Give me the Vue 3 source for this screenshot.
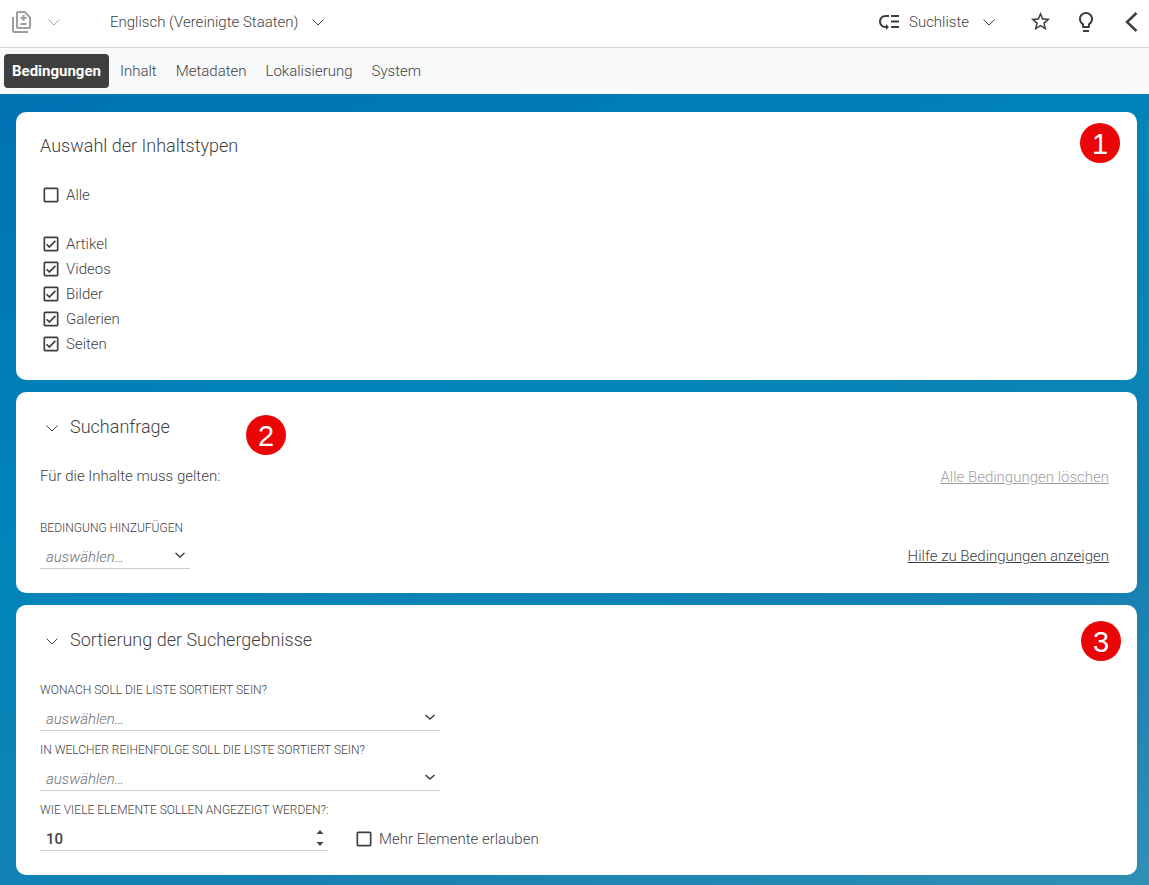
<script setup>
import { ref, reactive } from 'vue'

const tabs = ['Bedingungen', 'Inhalt', 'Metadaten', 'Lokalisierung', 'System']
const activeTab = ref('Bedingungen')

const language = ref('en-US')
const view = ref('list')

const all = ref(false)
const types = reactive([
  { id: 'article', label: 'Artikel', checked: true },
  { id: 'video', label: 'Videos', checked: true },
  { id: 'picture', label: 'Bilder', checked: true },
  { id: 'gallery', label: 'Galerien', checked: true },
  { id: 'page', label: 'Seiten', checked: true },
])

const toggleAll = () => types.forEach((type) => { type.checked = all.value })

const queryOpen = ref(true)
const sortOpen = ref(true)

const condition = ref('')
const sortBy = ref('')
const sortOrder = ref('')
const limit = ref(10)
const allowMore = ref(false)

const increment = () => limit.value++
const decrement = () => limit.value = Math.max(limit.value - 1, 0)

const boxEmpty = 'M19 5v14H5V5h14m0-2H5c-1.1 0-2 .9-2 2v14c0 1.1.9 2 2 2h14c1.1 0 2-.9 2-2V5c0-1.1-.9-2-2-2z'
const boxChecked = 'M19 3H5c-1.1 0-2 .9-2 2v14c0 1.1.9 2 2 2h14c1.1 0 2-.9 2-2V5c0-1.1-.9-2-2-2zm0 16H5V5h14v14zM17.99 9l-1.41-1.42-6.59 6.59-2.58-2.57-1.42 1.41 4 3.99z'
</script>

<template>
  <div class="app">
    <header class="toolbar">
      <button class="icon-button compare" type="button" aria-label="Vergleichen">
        <svg width="24" height="24" viewBox="0 0 24 24"><path d="M18 23H4c-1.1 0-2-.9-2-2V7h2v14h14v2zM14.500 7V5h-2v2h-2v2h2v2h2V9h2V7h-2zM16.500 13h-6v2h6v-2zM15 1H8c-1.100 0-1.990.9-1.990 2L6 17c0 1.100.89 2 1.990 2H19c1.100 0 2-.9 2-2V7l-6-6zm4 16H8V3h6.170L19 7.830V17z" /></svg>
        <svg class="chevron" width="14" height="14" viewBox="0 0 14 14"><path d="M1.500 4.500 7 10l5.500-5.500" /></svg>
      </button>

      <div class="picker language">
        <select v-model="language" aria-label="Sprache">
          <option value="en-US">Englisch (Vereinigte Staaten)</option>
        </select>
        <svg class="chevron" width="14" height="14" viewBox="0 0 14 14"><path d="M1.500 4.500 7 10l5.500-5.500" /></svg>
      </div>

      <div class="actions">
        <svg width="24" height="24" viewBox="0 0 24 24"><path d="M14 5h8v2h-8zm0 5.500h8v2h-8zm0 5.500h8v2h-8zM2 11.500C2 15.080 4.920 18 8.500 18H9v2l3-3-3-3v2h-.5C6.020 16 4 13.980 4 11.500S6.020 7 8.500 7H12V5H8.500C4.920 5 2 7.920 2 11.500z" /></svg>
        <div class="picker view">
          <select v-model="view" aria-label="Ansicht">
            <option value="list">Suchliste</option>
          </select>
          <svg class="chevron" width="14" height="14" viewBox="0 0 14 14"><path d="M1.500 4.500 7 10l5.500-5.500" /></svg>
        </div>
        <button class="icon-button star" type="button" aria-label="Favorit">
          <svg width="23" height="23" viewBox="0 0 24 24"><path d="M22 9.240l-7.190-.62L12 2 9.190 8.630 2 9.240l5.460 4.730L5.820 21 12 17.270 18.180 21l-1.630-7.030L22 9.240zM12 15.400l-3.760 2.270 1-4.280-3.320-2.880 4.380-.38L12 6.100l1.710 4.040 4.380.38-3.320 2.880 1 4.280L12 15.400z" /></svg>
        </button>
        <button class="icon-button bulb" type="button" aria-label="Hinweise">
          <svg width="24" height="24" viewBox="0 0 24 24"><path d="M9 20h6v2H9zM12 2C8.140 2 5 5.140 5 9c0 2.380 1.190 4.470 3 5.740V17c0 .55.45 1 1 1h6c.55 0 1-.45 1-1v-2.260c1.810-1.270 3-3.360 3-5.740 0-3.860-3.140-7-7-7zm2.850 11.100l-.85.6V16h-4v-2.300l-.85-.6C7.800 12.160 7 10.630 7 9c0-2.760 2.240-5 5-5s5 2.240 5 5c0 1.630-.8 3.160-2.150 4.100z" /></svg>
        </button>
        <button class="icon-button back" type="button" aria-label="Zurück">
          <svg width="14" height="24" viewBox="0 0 14 24"><path class="line" d="M12.500 3 3 12l9.500 9" /></svg>
        </button>
      </div>
    </header>

    <nav class="tabs">
      <button
        v-for="tab in tabs"
        :key="tab"
        type="button"
        :class="{ active: tab === activeTab }"
        @click="activeTab = tab">
        {{ tab }}
      </button>
    </nav>

    <main>
      <section class="card types">
        <span class="marker marker-one">1</span>
        <h2>Auswahl der Inhaltstypen</h2>
        <label class="check">
          <span class="box">
            <input v-model="all" type="checkbox" @change="toggleAll" />
            <svg width="20" height="20" viewBox="0 0 24 24"><path :d="all ? boxChecked : boxEmpty" /></svg>
          </span>
          Alle
        </label>
        <div class="type-list">
          <label v-for="type in types" :key="type.id" class="check">
            <span class="box">
              <input v-model="type.checked" type="checkbox" />
              <svg width="20" height="20" viewBox="0 0 24 24"><path :d="type.checked ? boxChecked : boxEmpty" /></svg>
            </span>
            {{ type.label }}
          </label>
        </div>
      </section>

      <section class="card query">
        <span class="marker marker-two">2</span>
        <h2>
          <button class="toggle" type="button" :aria-expanded="queryOpen" @click="queryOpen = !queryOpen">
            <svg class="chevron" width="14" height="14" viewBox="0 0 14 14"><path d="M1.500 4.500 7 10l5.500-5.500" /></svg>
            Suchanfrage
          </button>
        </h2>
        <div v-if="queryOpen">
          <div class="row intro">
            <span>Für die Inhalte muss gelten:</span>
            <a class="muted" href="#">Alle Bedingungen löschen</a>
          </div>
          <div class="row">
            <div class="field short">
              <label for="condition">Bedingung hinzufügen</label>
              <div class="control">
                <select id="condition" v-model="condition">
                  <option value="">auswählen…</option>
                </select>
                <svg class="arrow" width="12" height="12" viewBox="0 0 12 12"><path d="M1.500 4 6 8l4.500-4" /></svg>
              </div>
            </div>
            <a class="help" href="#">Hilfe zu Bedingungen anzeigen</a>
          </div>
        </div>
      </section>

      <section class="card sorting">
        <span class="marker marker-three">3</span>
        <h2>
          <button class="toggle" type="button" :aria-expanded="sortOpen" @click="sortOpen = !sortOpen">
            <svg class="chevron" width="14" height="14" viewBox="0 0 14 14"><path d="M1.500 4.500 7 10l5.500-5.500" /></svg>
            Sortierung der Suchergebnisse
          </button>
        </h2>
        <div v-if="sortOpen" class="fields">
          <div class="field">
            <label for="sort-by">Wonach soll die Liste sortiert sein?</label>
            <div class="control">
              <select id="sort-by" v-model="sortBy">
                <option value="">auswählen…</option>
              </select>
              <svg class="arrow" width="12" height="12" viewBox="0 0 12 12"><path d="M1.500 4 6 8l4.500-4" /></svg>
            </div>
          </div>
          <div class="field">
            <label for="sort-order">In welcher Reihenfolge soll die Liste sortiert sein?</label>
            <div class="control">
              <select id="sort-order" v-model="sortOrder">
                <option value="">auswählen…</option>
              </select>
              <svg class="arrow" width="12" height="12" viewBox="0 0 12 12"><path d="M1.500 4 6 8l4.500-4" /></svg>
            </div>
          </div>
          <div class="limit">
            <div class="field number">
              <label for="limit">Wie viele Elemente sollen angezeigt werden?:</label>
              <div class="control">
                <input id="limit" v-model.number="limit" type="number" min="0" />
                <span class="spinner">
                  <button type="button" aria-label="Mehr" @click="increment"><svg width="8" height="4" viewBox="0 0 8 4"><path d="M.5 4h7L4 0z" /></svg></button>
                  <button type="button" aria-label="Weniger" @click="decrement"><svg width="8" height="4" viewBox="0 0 8 4"><path d="M.5 0h7L4 4z" /></svg></button>
                </span>
              </div>
            </div>
            <label class="check">
              <span class="box">
                <input v-model="allowMore" type="checkbox" />
                <svg width="20" height="20" viewBox="0 0 24 24"><path :d="allowMore ? boxChecked : boxEmpty" /></svg>
              </span>
              Mehr Elemente erlauben
            </label>
          </div>
        </div>
      </section>
    </main>
  </div>
</template>

<style>
body {
  margin: 0;
}
</style>

<style scoped>
.app {
  min-height: 100vh;
  display: flex;
  flex-direction: column;
  font-family: Roboto, "Liberation Sans", sans-serif;
  font-size: 15px;
  font-weight: 300;
  line-height: 20px;
  color: #3f3f3f;
}

.app, .app * {
  box-sizing: border-box;
}

button, select, input {
  appearance: none;
  margin: 0;
  padding: 0;
  border: 0;
  border-radius: 0;
  background: none;
  font: inherit;
  color: inherit;
}

button {
  cursor: pointer;
}

svg {
  display: block;
  flex: none;
  fill: #3f3f3f;
}

.chevron, .arrow, .line {
  fill: none;
  stroke: #3f3f3f;
}

.arrow {
  stroke-width: 1.5;
}

.line {
  stroke-width: 2.5;
}

.toolbar {
  display: flex;
  align-items: center;
  height: 48px;
  padding: 0 11px 4px 10px;
  border-bottom: 1px solid #d5d5d5;
  background: #fff;
}

.icon-button {
  display: flex;
  align-items: center;
}

.compare {
  gap: 13px;
  opacity: .5;
}

.picker {
  display: grid;
  align-items: center;
}

.picker select, .picker svg {
  grid-area: 1 / 1;
}

.picker svg {
  justify-self: end;
  pointer-events: none;
}

.picker select {
  padding-right: 26px;
}

.language {
  margin-left: 49px;
}

.actions {
  display: flex;
  align-items: center;
  margin-left: auto;
}

.view {
  margin-left: 8px;
}

.star {
  margin-left: 33px;
}

.bulb {
  margin-left: 22px;
}

.back {
  margin-left: 26px;
}

.tabs {
  display: flex;
  gap: 3px;
  padding: 6px 4px;
  background: #f8f9fb;
}

.tabs button {
  height: 34px;
  padding: 0 8px;
  border-radius: 4px;
}

.tabs .active {
  background: #3f3f3f;
  color: #fff;
  font-weight: 700;
}

main {
  flex: 1;
  display: flex;
  flex-direction: column;
  gap: 12px;
  padding: 18px 12px 10px 16px;
  background: linear-gradient(160deg, #0073b3 0%, #0085b9 40%, #1781b1 75%, #2e90b5 100%);
}

.card {
  position: relative;
  padding: 20px 28px 24px 24px;
  border-radius: 10px;
  background: #fff;
}

h2 {
  display: flex;
  align-items: center;
  height: 30px;
  margin: 0;
  font-size: 18px;
  font-weight: 300;
}

.toggle {
  display: flex;
  align-items: center;
  gap: 11px;
  padding-left: 5px;
}

.toggle .chevron {
  margin-top: 2px;
}

.types h2 {
  height: 28px;
  margin-bottom: 22px;
}

.check {
  display: flex;
  align-items: center;
  gap: 4px;
  height: 25px;
}

.box {
  display: grid;
  place-items: center;
  width: 22px;
  height: 22px;
}

.box input, .box svg {
  grid-area: 1 / 1;
}

.box input {
  width: 16px;
  height: 16px;
}

.box svg {
  pointer-events: none;
}

.type-list {
  margin-top: 24px;
}

.row {
  display: flex;
  justify-content: space-between;
  align-items: flex-end;
}

.intro {
  align-items: flex-start;
  height: 21px;
  margin: 24px 0 33px;
}

a {
  color: inherit;
}

.muted {
  align-self: flex-end;
  color: #9f9f9f;
}

.help {
  margin-bottom: 3px;
}

.field {
  width: 400px;
}

.field.short {
  width: 150px;
}

.field.number {
  width: 288px;
}

.field label {
  display: block;
  font-size: 12px;
  line-height: 16px;
  text-transform: uppercase;
  white-space: nowrap;
}

.control {
  display: grid;
  align-items: center;
  height: 33px;
  padding-top: 4px;
  border-bottom: 1px solid #ccc;
}

.control > * {
  grid-area: 1 / 1;
}

.control select, .control input {
  width: 100%;
  height: 28px;
  padding: 5px 0 0 6px;
}

.control select {
  font-style: italic;
  color: #6f6f6f;
}

.control input {
  min-width: 0;
  font-weight: 500;
  appearance: textfield;
}

.arrow {
  justify-self: end;
  margin: 2px 4px 0 0;
  pointer-events: none;
}

.spinner {
  display: flex;
  flex-direction: column;
  gap: 8px;
  justify-self: end;
  margin: 4px 4px 0 0;
}

.spinner button {
  display: block;
}

input[type=number]::-webkit-inner-spin-button,
input[type=number]::-webkit-outer-spin-button {
  -webkit-appearance: none;
  margin: 0;
}

.fields {
  display: flex;
  flex-direction: column;
  gap: 11px;
  margin-top: 27px;
}

.limit {
  display: flex;
  align-items: flex-end;
  gap: 25px;
}

.marker {
  position: absolute;
  display: grid;
  place-items: center;
  width: 40px;
  height: 40px;
  padding-top: 2px;
  border-radius: 50%;
  background: #ea0606;
  color: #fff;
  font-family: "Liberation Sans", Arial, sans-serif;
  font-size: 29px;
  font-weight: 400;
}

.marker-one {
  top: 11px;
  right: 17px;
}

.marker-two {
  top: 23px;
  left: 230px;
}

.marker-three {
  top: 16px;
  right: 16px;
}
</style>
